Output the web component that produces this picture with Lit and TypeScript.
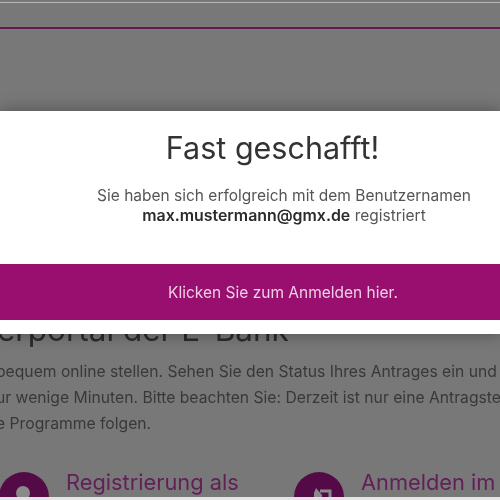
import { LitElement, html, css } from "lit";
import { customElement } from "lit/decorators.js";

@customElement("app-root")
export class AppRoot extends LitElement {
  static styles = css`
    :host {
      display: block;
      width: 500px;
      height: 500px;
      overflow: hidden;
      position: relative;
      font-family: "Inter", "Liberation Sans", sans-serif;
      background: #787878;
    }
    .page {
      height: 500px;
      display: flex;
      flex-direction: column;
      overflow: hidden;
      box-sizing: border-box;
      padding-top: 2px;
      filter: blur(0.4px);
    }
    .topline {
      height: 1px;
      background: #b8b8b8;
      flex: none;
    }
    .rule {
      height: 2px;
      margin-top: 24px;
      background: #5c1a55;
      box-shadow: 0 0 1px 1px rgba(150, 120, 145, 0.25);
      flex: none;
    }
    .heading {
      margin: 283px 0 0 -3px;
      font-size: 31.5px;
      line-height: 36px;
      color: #2b2b2b;
      white-space: nowrap;
      flex: none;
    }
    .copy {
      margin: 11px 0 0 -4px;
      font-size: 15.7px;
      line-height: 26px;
      color: #383838;
      white-space: nowrap;
      flex: none;
    }
    .cards {
      display: flex;
      margin-top: 30px;
      flex: none;
    }
    .card {
      display: flex;
      gap: 17px;
      width: 295px;
      flex: none;
      margin-left: -1px;
    }
    .card + .card {
      margin-left: 0;
      width: 210px;
      gap: 17px;
    }
    .circle {
      width: 50px;
      height: 50px;
      border-radius: 50%;
      background: #540a46;
      flex: none;
      margin-top: 5px;
    }
    .circle svg { display: block; }
    .label {
      font-size: 21.8px;
      line-height: 30px;
      color: #622058;
      white-space: nowrap;
    }
    .modal {
      position: absolute;
      left: 0;
      right: 0;
      top: 111px;
      height: 223px;
      background: #fff;
      display: flex;
      flex-direction: column;
      align-items: center;
      box-shadow: 0 0 16px rgba(0, 0, 0, 0.35);
      filter: blur(0.35px);
    }
    h1 {
      margin: 18px 0 0;
      font-size: 30.5px;
      line-height: 38px;
      font-weight: 400;
      color: #333;
      padding-left: 45px;
    }
    p {
      margin: 19px 0 0;
      font-size: 15.5px;
      line-height: 20px;
      color: #555;
      text-align: center;
      width: 500px;
      padding-left: 68px;
      box-sizing: border-box;
      white-space: nowrap;
    }
    b { color: #2b2b2b; font-weight: 600; font-size: 15.9px; }
    .cta {
      margin-top: 38px;
      align-self: stretch;
      height: 56px;
      background: #980f70;
      color: #eecfe4;
      font-size: 15.5px;
      display: flex;
      align-items: center;
      justify-content: center;
      padding-left: 66px;
    }
    .bottom {
      position: absolute;
      left: 0;
      right: 0;
      bottom: 0;
      height: 3px;
      background: #e4e4e4;
    }
  `;

  render() {
    return html`
      <div class="page">
        <div class="topline"></div>
        <div class="rule"></div>
        <div class="heading">erportal der E-Bank</div>
        <div class="copy">
          bequem online stellen. Sehen Sie den Status Ihres Antrages ein und<br />
          ur wenige Minuten. Bitte beachten Sie: Derzeit ist nur eine Antragste<br />
          e Programme folgen.
        </div>
        <div class="cards">
          <div class="card">
            <div class="circle">
              <svg width="50" height="50" viewBox="0 0 50 50"><circle cx="24" cy="21" r="7" fill="#8a8a8a" /></svg>
            </div>
            <div class="label">Registrierung als</div>
          </div>
          <div class="card">
            <div class="circle">
              <svg width="50" height="50" viewBox="0 0 50 50">
                <path d="M13 25h7v-4l2-5 6 7v6H13z" fill="#8a8a8a" />
                <path d="M26 19h10v10" fill="none" stroke="#8a8a8a" stroke-width="3" />
              </svg>
            </div>
            <div class="label">Anmelden im</div>
          </div>
        </div>
      </div>
      <div class="modal">
        <h1>Fast geschafft!</h1>
        <p>Sie haben sich erfolgreich mit dem Benutzernamen<br /><b>max.mustermann@gmx.de</b> registriert</p>
        <div class="cta">Klicken Sie zum Anmelden hier.</div>
      </div>
      <div class="bottom"></div>
    `;
  }
}
